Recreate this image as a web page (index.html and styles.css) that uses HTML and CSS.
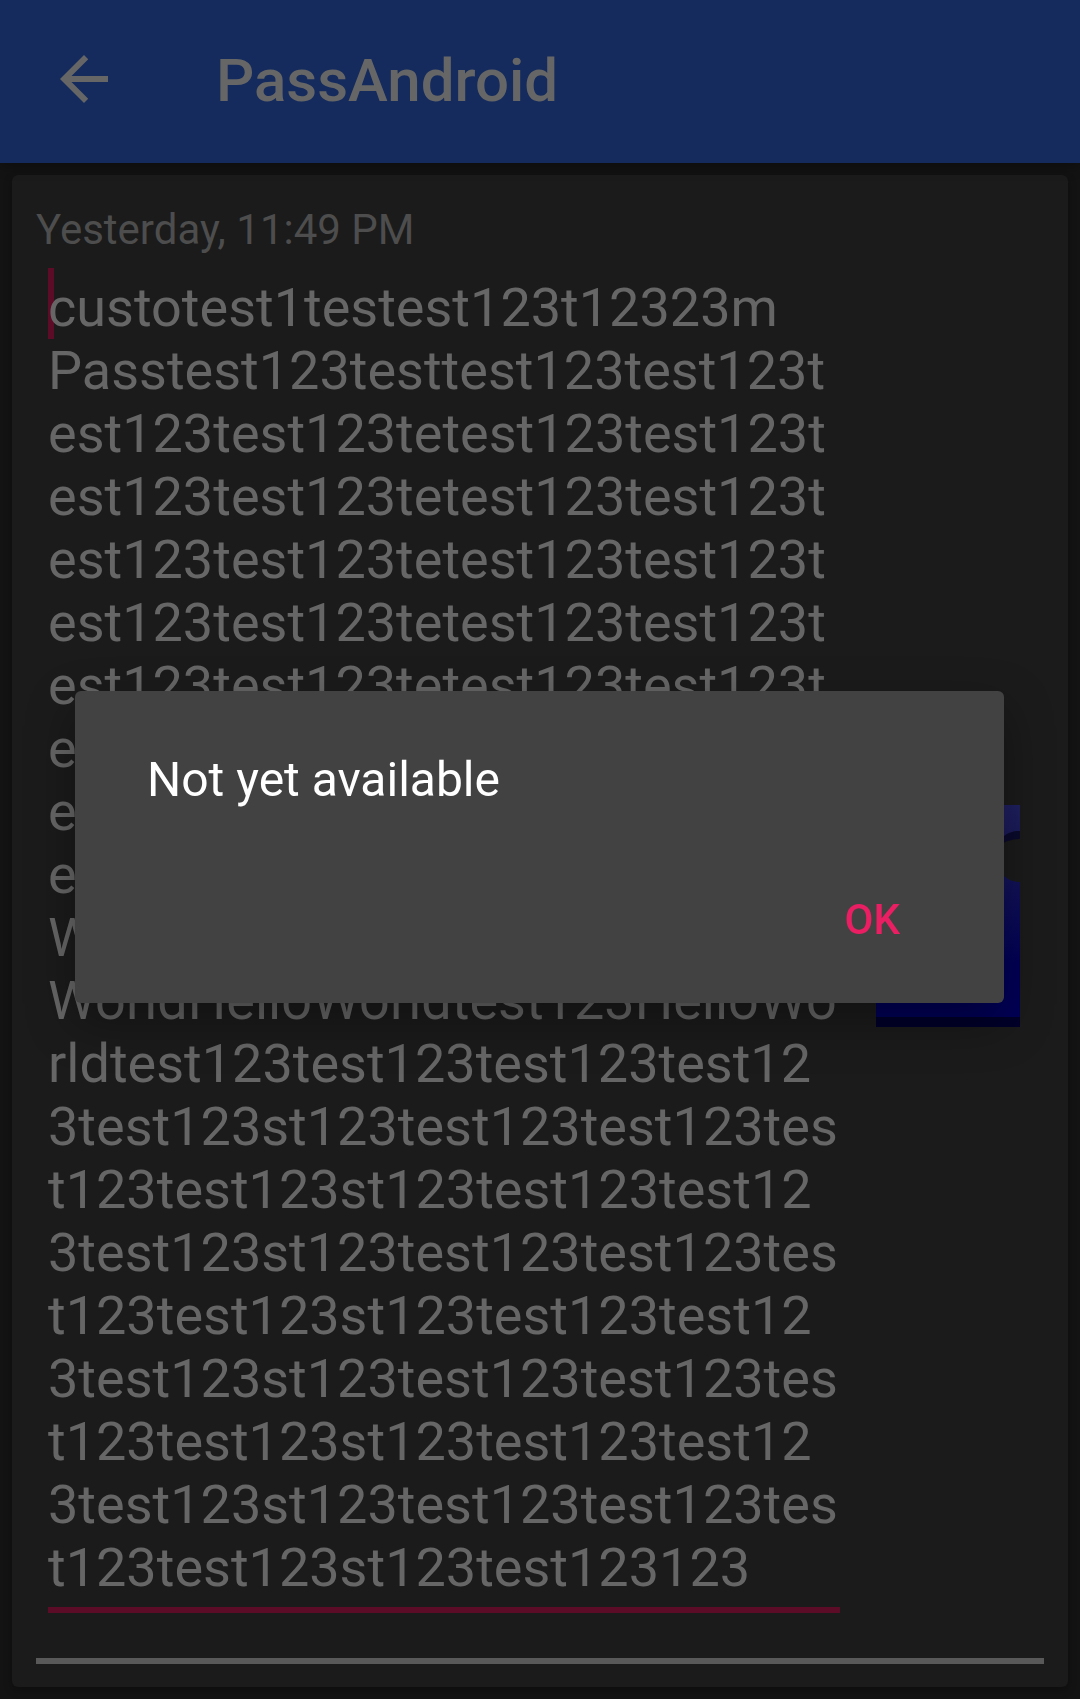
FILE: index.html
```html
<!DOCTYPE html>
<html lang="en">
<head>
<meta charset="utf-8">
<meta name="viewport" content="width=device-width, initial-scale=1">
<title>PassAndroid</title>
<link rel="stylesheet" href="styles.css">
</head>
<body>
<header class="app-bar">
  <button class="back" type="button" aria-label="Back">
    <svg viewBox="0 0 24 24" width="72" height="72" aria-hidden="true"><path fill="currentColor" d="M20 11H7.83l5.59-5.59L12 4l-8 8 8 8 1.41-1.41L7.83 13H20z"/></svg>
  </button>
  <h1 class="app-title">PassAndroid</h1>
</header>
<main class="page">
  <section class="card">
    <label class="date" for="description">Yesterday, 11:49 PM</label>
    <div class="entry">
      <div class="field">
        <span class="caret"></span>
        <textarea class="description" id="description" rows="21" spellcheck="false">custotest1testest123t12323m
Passtest123testtest123test123t
est123test123tetest123test123t
est123test123tetest123test123t
est123test123tetest123test123t
est123test123tetest123test123t
est123test123tetest123test123t
est123test123tetest123test123t
est123test123tetest123test123t
est123test123testtest123Hello
WorldHelloWorldtest123Hello
WorldHelloWorldtest123HelloWo
rldtest123test123test123test12
3test123st123test123test123tes
t123test123st123test123test12
3test123st123test123test123tes
t123test123st123test123test12
3test123st123test123test123tes
t123test123st123test123test12
3test123st123test123test123tes
t123test123st123test123123</textarea>
      </div>
      <svg class="pass-icon" viewBox="0 0 144 222" aria-hidden="true">
        <defs>
          <linearGradient id="stub" x1="0" y1="0" x2="0" y2="1"><stop offset="0" stop-color="#1f1f60"/><stop offset="1" stop-color="#1a1a58"/></linearGradient>
          <linearGradient id="body" x1="0" y1="0" x2="0" y2="1"><stop offset="0" stop-color="#131358"/><stop offset=".6" stop-color="#000057"/><stop offset="1" stop-color="#000057"/></linearGradient>
        </defs>
        <path fill="url(#stub)" d="M0 0H144V26C136 26 131 30 127 36H17C13 30 8 26 0 26Z"/>
        <path fill="#0a0a2c" d="M144 26V34C137 34 132 36 127 38V32C131 28 137 26 144 26Z"/>
        <path fill="url(#body)" d="M0 77C6 77 12 75 16 71H128C132 75 138 77 144 77V222H0Z"/>
        <path fill="#00002a" d="M0 212H144V222H0Z"/>
      </svg>
    </div>
    <hr class="divider">
  </section>
</main>
<div class="overlay">
  <div class="dialog" role="alertdialog" aria-modal="true" aria-labelledby="message">
    <p class="message" id="message">Not yet available</p>
    <button class="ok" type="button">OK</button>
  </div>
</div>
</body>
</html>
```
FILE: styles.css
```css
* { box-sizing: border-box; }

body {
  margin: 0;
  background: #131313;
  color: #666;
  font-family: Roboto, sans-serif;
}

button {
  border: 0;
  background: none;
  font-family: inherit;
}

.app-bar {
  position: relative;
  display: flex;
  align-items: center;
  gap: 96px;
  padding: 43px 48px 44px;
  background: #152b5d;
  box-shadow: 0 4px 12px rgba(0, 0, 0, .3);
}

.back {
  padding: 0 0 4px;
  color: #666;
}

.back svg { display: block; }

.app-title {
  margin: 0;
  font-size: 60px;
  font-weight: 500;
  line-height: 72px;
}

.page { padding: 12px; }

.card {
  padding: 30px 24px 23px;
  border-radius: 6px;
  background: #1b1b1b;
  box-shadow: 0 3px 9px rgba(0, 0, 0, .3);
}

.date {
  display: block;
  color: #4d4d4d;
  font-size: 42px;
  line-height: 49px;
}

.entry {
  display: flex;
  align-items: center;
  gap: 36px;
  margin: 14px 24px 45px 12px;
}

.field {
  position: relative;
  flex: 1;
}

.caret {
  position: absolute;
  top: 0;
  left: 0;
  width: 6px;
  height: 71px;
  background: #5d0c27;
}

.description {
  position: relative;
  display: block;
  width: 100%;
  padding: 8px 0;
  border: 0;
  border-bottom: 6px solid #5d0c27;
  outline: 0;
  background: transparent;
  color: #666;
  font-family: inherit;
  font-size: 54px;
  line-height: 63px;
  white-space: pre;
  overflow: hidden;
  resize: none;
}

.pass-icon {
  flex: none;
  width: 144px;
  height: 222px;
  margin-bottom: 50px;
}

.divider {
  height: 6px;
  margin: 0;
  border: 0;
  background: #595959;
}

.overlay {
  position: fixed;
  inset: 0;
  display: flex;
  align-items: center;
  padding: 0 76px 5px 75px;
}

.dialog {
  display: flex;
  flex-direction: column;
  flex: 1;
  gap: 78px;
  padding: 61px 72px 50px;
  border-radius: 6px;
  background: #424242;
  box-shadow: 0 18px 48px rgba(0, 0, 0, .35);
}

.message {
  margin: 0;
  color: #fff;
  font-size: 48px;
  line-height: 56px;
}

.ok {
  align-self: flex-end;
  padding: 9px 32px;
  color: #e91e63;
  font-size: 42px;
  font-weight: 500;
  line-height: 49px;
}
```
